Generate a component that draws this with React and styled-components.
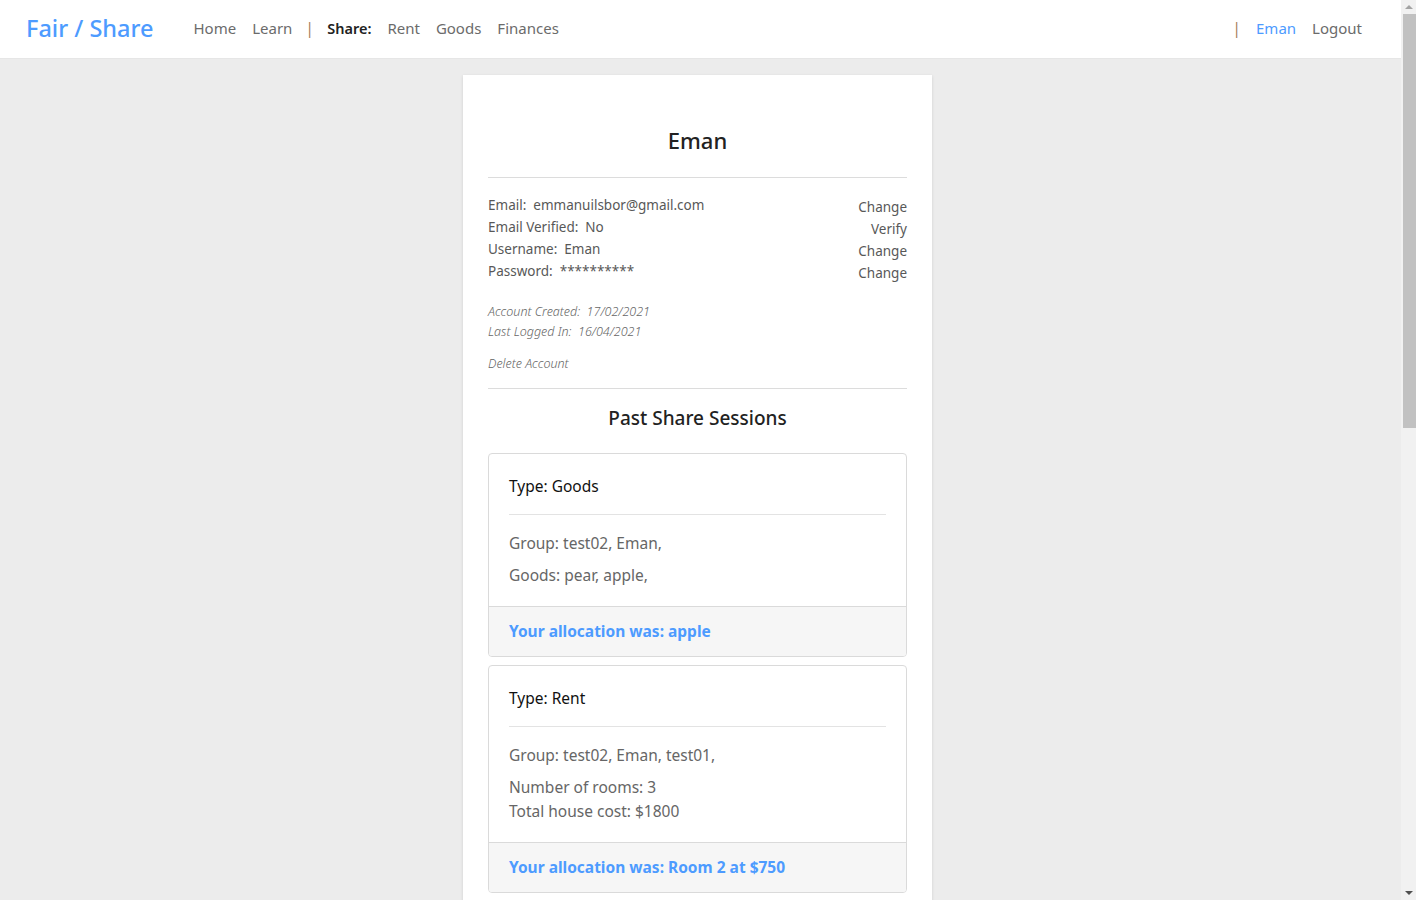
import React from 'react';
import styled, {createGlobalStyle} from 'styled-components';

const GlobalStyle = createGlobalStyle`
  html, body {
    margin: 0;
    padding: 0;
    background: #ececec;
    font-family: 'Noto Sans', 'Open Sans', sans-serif;
    color: #333;
  }
  body {
    padding-right: 15px;
  }
  * { box-sizing: border-box; }
`

const sessions = [
  {
    type: 'Goods',
    lines: [['Group: test02, Eman,'], ['Goods: pear, apple,']],
    allocation: 'apple'
  },
  {
    type: 'Rent',
    lines: [['Group: test02, Eman, test01,'], ['Number of rooms: 3', 'Total house cost: $1800']],
    allocation: 'Room 2 at $750'
  }
]

class App extends React.Component {
  render() {
    return (
      <>
        <GlobalStyle />
        <NavBar>
          <Brand>Fair / Share</Brand>
          <NavLinks>
            <NavLink>Home</NavLink>
            <NavLink>Learn</NavLink>
            <Divider>|</Divider>
            <NavLabel>Share:</NavLabel>
            <NavLink>Rent</NavLink>
            <NavLink>Goods</NavLink>
            <NavLink>Finances</NavLink>
          </NavLinks>
          <RightLinks>
            <Divider>|</Divider>
            <NavLink active>Eman</NavLink>
            <NavLink>Logout</NavLink>
          </RightLinks>
        </NavBar>
        <Main>
          <Panel>
            <Title>Eman</Title>
            <Rule top={18} />
            <InfoGrid>
              <InfoList>
                <InfoRow>Email:&nbsp; emmanuilsbor@gmail.com</InfoRow>
                <InfoRow>Email Verified:&nbsp; No</InfoRow>
                <InfoRow>Username:&nbsp; Eman</InfoRow>
                <InfoRow>Password:&nbsp; **********</InfoRow>
              </InfoList>
              <ActionList>
                <Action>Change</Action>
                <Action>Verify</Action>
                <Action>Change</Action>
                <Action>Change</Action>
              </ActionList>
            </InfoGrid>
            <Meta>
              <MetaRow>Account Created:&nbsp; 17/02/2021</MetaRow>
              <MetaRow>Last Logged In:&nbsp; 16/04/2021</MetaRow>
            </Meta>
            <DeleteLink>Delete Account</DeleteLink>
            <Rule top={14} />
            <SubTitle>Past Share Sessions</SubTitle>
            <SessionList>
              {sessions.map((s, i) => (
                <SessionCard key={i}>
                  <CardHead>Type: {s.type}</CardHead>
                  <CardBody>
                    {s.lines.map((group, j) => (
                      <CardPara key={j}>
                        {group.map((l, k) => <div key={k}>{l}</div>)}
                      </CardPara>
                    ))}
                  </CardBody>
                  <CardFoot>Your allocation was: {s.allocation}</CardFoot>
                </SessionCard>
              ))}
            </SessionList>
          </Panel>
        </Main>
        <ScrollTrack>
          <ScrollArrow up />
          <ScrollThumb />
          <ScrollSpacer />
          <ScrollArrow />
        </ScrollTrack>
      </>
    );
  }
}

const NavBar = styled.nav`
  display: flex;
  align-items: center;
  height: 59px;
  padding: 0 39px 2px 26px;
  background: #fff;
  border-bottom: 1px solid #e6e6e6;
`

const Brand = styled.div`
  color: #4d9bff;
  font-size: 23.5px;
  font-weight: 500;
  margin-right: 40px;
`

const NavLinks = styled.div`
  display: flex;
  align-items: center;
  gap: 16px;
  flex: 1;
`

const RightLinks = styled.div`
  display: flex;
  align-items: center;
  gap: 16px;
`

const NavLink = styled.a`
  color: ${p => p.active ? '#4d9bff' : '#6b6b6b'};
  font-size: 15px;
  cursor: pointer;
`

const NavLabel = styled.span`
  color: #222;
  font-size: 14.5px;
  font-weight: 600;
  margin-left: -2px;
`

const Divider = styled.span`
  color: #a8825f;
  font-size: 16px;
  margin: 0 -1px 0 -3px;
`

const Main = styled.main`
  display: flex;
  justify-content: center;
  padding: 16px 6px 40px 0;
`

const Panel = styled.section`
  width: 469px;
  background: #fff;
  padding: 46px 25px 30px;
  box-shadow: 0 1px 3px rgba(0, 0, 0, 0.12);
`

const Title = styled.h2`
  margin: 0;
  text-align: center;
  font-size: 22px;
  font-weight: 500;
  color: #222;
  line-height: 38px;
`

const Rule = styled.hr`
  border: 0;
  border-top: 1px solid #dcdcdc;
  margin: ${p => p.top}px 0 0;
`

const InfoGrid = styled.div`
  display: flex;
  justify-content: space-between;
  margin-top: 16px;
`

const InfoList = styled.div`
  display: flex;
  flex-direction: column;
`

const InfoRow = styled.div`
  font-size: 13.5px;
  color: #585858;
  line-height: 22px;
`

const ActionList = styled.div`
  display: flex;
  flex-direction: column;
  align-items: flex-end;
  padding-top: 2px;
`

const Action = styled.a`
  font-size: 13.5px;
  color: #585858;
  line-height: 22px;
  cursor: pointer;
`

const Meta = styled.div`
  margin-top: 18px;
`

const MetaRow = styled.div`
  font-size: 12.5px;
  font-style: italic;
  font-weight: 300;
  color: #666;
  line-height: 20px;
`

const DeleteLink = styled.a`
  display: block;
  margin-top: 12px;
  font-size: 12.5px;
  font-style: italic;
  font-weight: 300;
  color: #666;
  line-height: 20px;
  cursor: pointer;
`

const SubTitle = styled.h3`
  margin: 15px 0 21px;
  text-align: center;
  font-size: 19px;
  font-weight: 500;
  color: #222;
  line-height: 28px;
`

const SessionList = styled.div`
  display: flex;
  flex-direction: column;
  gap: 8px;
`

const SessionCard = styled.div`
  border: 1px solid #dadada;
  border-radius: 4px;
  overflow: hidden;
`

const CardHead = styled.div`
  margin: 0 20px;
  padding: 21px 0 17px;
  font-size: 15.5px;
  color: #111;
  line-height: 22px;
  border-bottom: 1px solid #e3e3e3;
`

const CardBody = styled.div`
  padding: 16px 20px 19px;
  display: flex;
  flex-direction: column;
  gap: 8px;
`

const CardPara = styled.div`
  font-size: 15.5px;
  color: #666;
  line-height: 24px;
`

const CardFoot = styled.div`
  background: #f6f6f6;
  border-top: 1px solid #dadada;
  padding: 12px 20px 13px;
  font-size: 15.5px;
  font-weight: 700;
  color: #4d9bff;
  line-height: 24px;
`

/* stand-in for the browser scrollbar shown in the screenshot */
const ScrollTrack = styled.div`
  position: fixed;
  top: 0;
  right: 0;
  width: 15px;
  height: 100vh;
  background: #f1f1f1;
  display: flex;
  flex-direction: column;
  align-items: center;
`

const ScrollArrow = styled.div`
  flex: none;
  width: 15px;
  height: 14px;
  display: flex;
  align-items: center;
  justify-content: center;
  &::before {
    content: '';
    border-left: 4px solid transparent;
    border-right: 4px solid transparent;
    ${p => p.up
      ? 'border-bottom: 4px solid #a3a3a3;'
      : 'border-top: 4px solid #505050;'}
  }
`

const ScrollThumb = styled.div`
  flex: none;
  width: 13px;
  margin-left: 2px;
  height: 414px;
  background: #c1c1c1;
`

const ScrollSpacer = styled.div`
  flex: 1;
`

export default App;
